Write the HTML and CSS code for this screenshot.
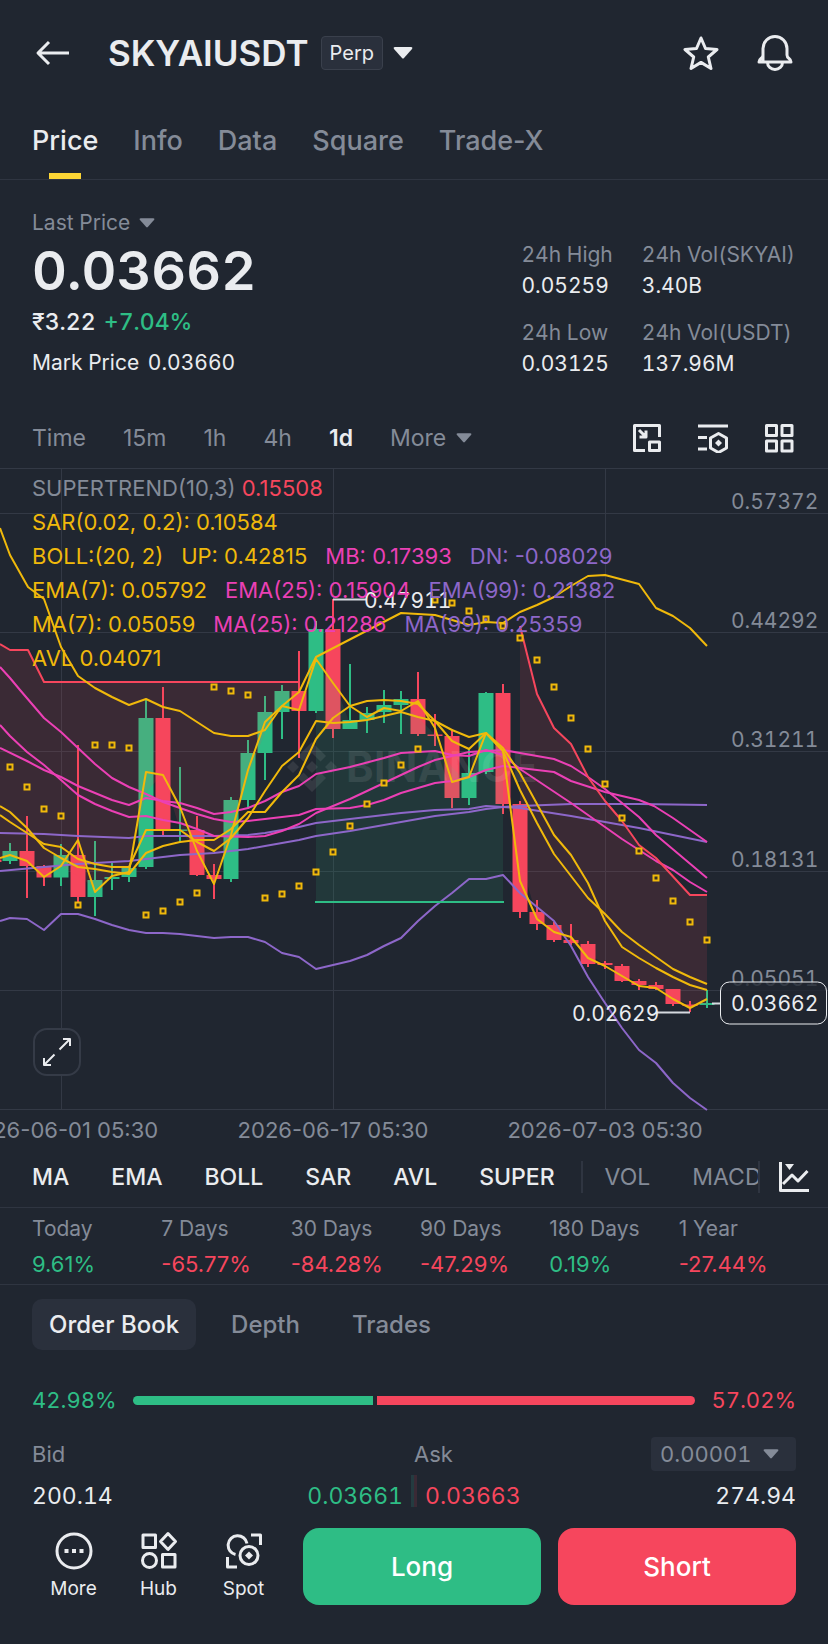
FILE: index.html
```html
<!DOCTYPE html>
<html lang="en">
<head>
<meta charset="utf-8">
<meta name="viewport" content="width=device-width, initial-scale=1">
<title>SKYAIUSDT Perp</title>
<link rel="stylesheet" href="styles.css">
</head>
<body>
<div class="app">
  <header class="topbar">
    <button class="icon-btn" type="button" aria-label="Back">
      <svg class="icon" width="36" height="30" viewBox="0 0 36 30"><path d="M35 15H4M15 4 4 15l11 11"/></svg>
    </button>
    <h1 class="pair">SKYAIUSDT</h1>
    <span class="badge">Perp</span>
    <button class="icon-btn" type="button" aria-label="Choose pair">
      <svg class="caret caret-lg" width="20" height="12" viewBox="0 0 20 12"><path d="M2 0h16q2 0 1 2l-8 9q-1 1-2 0L1 2Q0 0 2 0z"/></svg>
    </button>
    <div class="topbar-actions">
      <button class="icon-btn" type="button" aria-label="Favourite">
        <svg class="icon" width="36" height="36" viewBox="0 0 36 36"><path d="m18 3 4.500 10.500 11.500 1-8.700 7.500 2.700 11.500-10-6.100-10 6.100 2.700-11.500L2 14.500l11.500-1z"/></svg>
      </button>
      <button class="icon-btn" type="button" aria-label="Alerts">
        <svg class="icon" width="36" height="36" viewBox="0 0 36 36"><path d="M6 27V13.500a12 12 0 0 1 24 0V20q0 2 2 3.500 2 1.500 2 3.500H2q0-2 2-3.500 2-1.500 2-3.500M10.500 27.500a7.500 7 0 0 0 15 0"/></svg>
      </button>
    </div>
  </header>

  <nav class="tabs" aria-label="Sections">
    <a class="tab tab-active" href="#price">Price</a>
    <a class="tab" href="#info">Info</a>
    <a class="tab" href="#data">Data</a>
    <a class="tab" href="#square">Square</a>
    <a class="tab" href="#tradex">Trade-X</a>
  </nav>

  <section class="summary">
    <div class="quote">
      <button class="quote-type" type="button">Last Price
        <svg class="caret" width="16" height="10" viewBox="0 0 20 12"><path d="M2 0h16q2 0 1 2l-8 9q-1 1-2 0L1 2Q0 0 2 0z"/></svg>
      </button>
      <div class="quote-price">0.03662</div>
      <div class="quote-fiat">₹3.22 <span class="up">+7.04%</span></div>
      <div class="quote-mark">Mark Price <span>0.03660</span></div>
    </div>
    <dl class="stats">
      <div><dt>24h High</dt><dd>0.05259</dd></div>
      <div><dt>24h Vol(SKYAI)</dt><dd>3.40B</dd></div>
      <div><dt>24h Low</dt><dd>0.03125</dd></div>
      <div><dt>24h Vol(USDT)</dt><dd>137.96M</dd></div>
    </dl>
  </section>

  <div class="intervals">
    <button type="button">Time</button>
    <button type="button">15m</button>
    <button type="button">1h</button>
    <button type="button">4h</button>
    <button class="on" type="button">1d</button>
    <button class="with-caret" type="button">More
      <svg class="caret" width="16" height="10" viewBox="0 0 20 12"><path d="M2 0h16q2 0 1 2l-8 9q-1 1-2 0L1 2Q0 0 2 0z"/></svg>
    </button>
    <div class="chart-tools">
      <button class="icon-btn" type="button" aria-label="Floating window">
        <svg class="icon" width="30" height="30" viewBox="0 0 30 30"><path d="M13 27.500H2.500v-25h25V14M17.500 19h10v8.500h-10zM7 7l6.500 6.500M14 7.500V14H7.500"/></svg>
      </button>
      <button class="icon-btn" type="button" aria-label="Chart settings">
        <svg class="icon" width="30" height="30" viewBox="0 0 30 30"><path d="M0 3h30M0 14.500h9M0 26h9M20.500 10.500l8 4.500v10l-8 4.500-8-4.500V15z"/><path class="solid" d="m20.500 16.500 3.500 3.500-3.500 3.500L17 20z"/></svg>
      </button>
      <button class="icon-btn" type="button" aria-label="Layout">
        <svg class="icon" width="30" height="30" viewBox="0 0 30 30"><path d="M2.500 2.500h10v10h-10zM18 2.500h10v10H18zM2.500 18h10v10h-10zM18 18h10v10H18z"/></svg>
      </button>
    </div>
  </div>

  <section class="chart" id="price">
    <svg class="plot" viewBox="0 468 828 678" role="img" aria-label="Daily price chart">
      <defs>
        <marker id="sar" markerUnits="userSpaceOnUse" markerWidth="8" markerHeight="8" refX="4" refY="4"><rect class="sar-dot" x="1.500" y="1.500" width="5" height="5"/></marker>
      </defs>
      <path class="grid" d="M0 468.500H828M0 513.500H828M0 632.500H828M0 751.500H828M0 871.500H828M0 990.500H828M0 1109.500H828M61.500 468V1110M333.500 468V1110M605.500 468V1110"/>

      <path class="wick c-up" d="M10 843V864M61 844V886M95 841V916M112 863V890M129 867V882M146 700V869M180 767V842M231 797V882M248 740V809M265 696V780M282 685V739M316 621V713M350 664V729M367 707V733M384 690V723M401 691V734M469 749V805M486 692V774M707 990V1008"/>
      <path class="wick c-down" d="M27 816V898M44 865V886M78 745V903M163 687V835M197 816V876M214 864V899M299 651V758M333 599V738M418 672V736M435 714V746M452 729V808M503 684V814M520 801V918M537 900V930M554 922V942M571 924V945M588 941V967M605 961V969M622 964V982M639 979V990M656 982V990M673 989V1006M690 1001V1012"/>
      <path class="candle c-up" d="M10 851V861M61 855V877.500M95 880V897M112 877V879M129 868V877M146 718V867M180 829.500V831M231 800V879M248 753V800M265 712V753M282 691V712M316 629V711M350 720V729M367 713V720M384 705V712M401 699V705M469 773V798M486 693V772M707 1003V1005"/>
      <path class="candle c-down" d="M-6 859.500V862M27 851V866M44 866V877.500M78 855V897M163 718V830M197 830V875M214 875V879M299 691V711M333 629V729M418 699V734M435 734.500V736M452 736V798M503 693V804M520 804V912M537 912V924M554 925V940M571 940V943M588 944V964M605 963V965M622 966V981M639 981V985M656 985V989M673 989V1004M690 1004.500V1006"/>

      <path class="area-down" d="M0 644 10 650H28L44 682H299V701L282 701 265 732 248 777 231 840 214 877 197 852 180 830 163 774 146 792 129 872 112 878 95 888 78 876 61 866 44 872 27 858 10 856 0 859z"/>
      <path class="area-up" d="M316 902V670L333 679 350 724 367 716 384 708 401 702 418 717 435 735 452 767 469 785 486 733 503 748V902z"/>
      <path class="area-down" d="M520 626 537 694 554 728 571 744 588 777 605 801 622 821 639 845 656 858 690 895H707V1004L690 1005 673 997 656 987 639 983 622 973 605 964 588 954 571 942 554 932 537 918 520 858z"/>
      <g class="watermark">
        <path d="m312 742 14 14-5.500 5.500-8.500-8.500-8.500 8.500-5.500-5.500zM312 761l6 6-6 6-6-6zM293 761l6 6-6 6-6-6zM331 761l6 6-6 6-6-6zM312 792l14-14-5.500-5.500-8.500 8.500-8.500-8.500-5.500 5.500z"/>
        <text x="346" y="782">BINANCE</text>
      </g>

      <polyline class="line l-violet" points="0,833 44,834 78,836 129,838 146,836 180,836 214,836 248,835 265,833 299,827 316,823 350,819 401,813 435,810 469,809 486,806 503,807 520,808 571,816 639,828 707,842"/>
      <polyline class="line l-violet" points="0,871 44,867 78,864 129,861 180,855 214,853 248,849 265,846 299,840 316,836 350,831 401,822 435,816 469,812 486,809 503,807 520,806 571,804 639,804 707,805"/>
      <polyline class="line l-violet" points="0,921 10,918 27,919 44,930 61,914 78,914 95,919 112,925 129,930 146,933 163,933 180,934 214,938 231,937 248,937 265,942 282,953 299,957 316,969 350,961 367,955 384,946 401,938 418,921 435,906 452,893 469,879 486,879 503,875 520,893 537,907 554,921 571,946 588,977 605,1003 622,1028 639,1050 656,1063 673,1083 690,1098 707,1110"/>
      <polyline class="line l-pink" points="0,667 10,678 20,690 44,718 61,732 78,748 95,764 112,778 129,787 146,794 163,802 180,808 197,814 214,819 231,822 248,821 265,819 299,815 316,809 350,808 367,805 384,800 401,793 435,783 452,781 469,777 486,770 503,766 520,768 554,772 571,781 605,792 639,800 654,806 673,818 707,842"/>
      <polyline class="line l-pink" points="0,725 10,736 27,752 44,765 61,780 78,795 95,804 112,811 129,817 146,816 163,820 180,823 197,829 214,836 248,837 265,836 282,831 299,824 316,813 350,799 384,783 418,767 435,760 452,756 469,752 486,751 503,750 520,753 554,759 571,766 588,777 605,789 622,803 639,817 656,835 707,878"/>
      <polyline class="line l-pink" points="0,748 27,761 44,770 61,777 78,786 112,800 129,805 146,798 163,801 180,803 197,808 214,814 231,812 248,808 265,801 282,792 299,786 316,774 350,767 384,758 401,753 435,751 452,755 469,756 486,750 503,755 520,769 571,803 622,839 639,850 656,861 673,870 690,882 707,892"/>

      <polyline class="line l-red" points="0,644 10,650 28,650 44,682 299,682"/>
      <polyline class="line l-red" points="520,626 537,694 554,728 571,744 588,777 605,801 622,821 639,845 656,858 690,895 707,895"/>
      <path class="line l-green" d="M315 902H504"/>

      <polyline class="line l-gold" points="0,528 10,555 28,587 44,599 61,647 78,676 95,688 112,697 129,705 146,699 163,707 180,711 214,733 231,736 248,736 265,730 282,706 299,692 316,657 401,613 435,615 469,625 486,622 503,623 520,612 537,605 554,597 571,586 588,576 605,575 639,584 656,608 673,616 690,628 707,646"/>
      <polyline class="line l-gold" points="0,806 10,812 27,828 44,848 61,858 78,867 95,869 112,872 129,874 146,853 163,846 180,842 197,840 214,840 231,829 248,812 265,812 282,792 299,775 316,739 333,718 350,706 367,701 384,700 401,701 418,704 435,721 452,741 469,749 486,733 503,748 520,773 537,804 554,835 571,855 588,883 605,921 622,947 639,958 656,968 673,977 690,985 707,990"/>
      <polyline class="line l-gold" points="0,815 10,822 27,833 44,844 61,847 78,859 95,864 112,867 129,867 146,830 180,830 197,842 214,851 231,838 248,818 265,791 282,766 299,752 316,721 333,723 350,722 367,720 384,716 401,712 418,717 435,721 452,730 469,737 486,733 503,751 520,790 537,823 554,854 571,876 588,898 605,914 622,932 639,945 656,957 673,969 690,977 707,984"/>
      <polyline class="line l-gold" points="0,858 10,855 27,861 44,877 61,866 78,840 95,892 112,876 129,872 146,772 163,775 180,807 197,851 214,884 231,835 248,770 265,722 282,706 299,710 316,659 333,683 350,706 367,717 384,708 401,711 418,701 435,728 452,782 469,777 486,733 503,751 520,881 537,919 554,932 571,937 588,958 605,966 622,976 639,986 656,988 673,999 690,1008 707,999"/>
      <polyline class="sar" points="10,767 27,787 44,809 61,816 78,905 95,745 112,745 129,748 146,915 163,911 180,902 197,893 214,687 231,691 248,695 265,898 282,894 299,886 316,872 333,852 350,826 367,804 384,783 401,765 418,749 435,600 452,603 469,611 486,619 503,626 520,638 537,660 554,687 571,718 588,749 605,784 622,818 639,851 656,878 673,901 690,922 707,940"/>

      <path class="callout" d="M333 599.500H366M656 1012.500H690M712 1003.500H720"/>
      <text class="label" x="364" y="608">0.47911</text>
      <text class="label" x="572" y="1021">0.02629</text>

      <g class="axis">
        <text x="731" y="509">0.57372</text>
        <text x="731" y="628">0.44292</text>
        <text x="731" y="747">0.31211</text>
        <text x="731" y="867">0.18131</text>
        <text x="731" y="986">0.05051</text>
      </g>
      <g class="axis dates">
        <text x="62" y="1138" text-anchor="middle">2026-06-01 05:30</text>
        <text x="333" y="1138" text-anchor="middle">2026-06-17 05:30</text>
        <text x="605" y="1138" text-anchor="middle">2026-07-03 05:30</text>
      </g>
      <rect class="price-tag" x="720.500" y="982" width="106" height="42" rx="9"/>
      <text class="label" x="731" y="1011">0.03662</text>
    </svg>

    <div class="legend">
      <p><span class="muted">SUPERTREND(10,3)</span> <span class="red">0.15508</span></p>
      <p><span class="gold">SAR(0.02, 0.2): 0.10584</span></p>
      <p class="spaced"><span class="gold">BOLL:(20, 2)</span><span class="gold">UP: 0.42815</span><span class="pink">MB: 0.17393</span><span class="violet">DN: -0.08029</span></p>
      <p class="spaced"><span class="gold">EMA(7): 0.05792</span><span class="pink">EMA(25): 0.15904</span><span class="violet">EMA(99): 0.21382</span></p>
      <p class="spaced"><span class="gold">MA(7): 0.05059</span><span class="pink">MA(25): 0.21286</span><span class="violet">MA(99): 0.25359</span></p>
      <p><span class="gold">AVL 0.04071</span></p>
    </div>
    <button class="expand" type="button" aria-label="Full screen">
      <svg class="icon icon-thin" width="32" height="32" viewBox="0 0 32 32"><path d="M18.500 13.500 29 3M22 3h7v7M13.500 18.500 3 29M3 22v7h7"/></svg>
    </button>
  </section>

  <div class="indicators">
    <div class="indicator-list">
      <button class="on" type="button">MA</button>
      <button class="on" type="button">EMA</button>
      <button class="on" type="button">BOLL</button>
      <button class="on" type="button">SAR</button>
      <button class="on" type="button">AVL</button>
      <button class="on" type="button">SUPER</button>
      <span class="rule"></span>
      <button type="button">VOL</button>
      <button type="button">MACD</button>
    </div>
    <button class="icon-btn indicator-more" type="button" aria-label="Indicators">
      <svg class="icon" width="32" height="32" viewBox="0 0 32 32"><path d="M2.500 1v28.500H31M5 23l9-9 6 6 9.500-10"/><path class="solid" d="M7 3h9l-4.500 6z"/></svg>
    </button>
  </div>

  <dl class="performance">
    <div><dt>Today</dt><dd class="up">9.61%</dd></div>
    <div><dt>7 Days</dt><dd class="red">-65.77%</dd></div>
    <div><dt>30 Days</dt><dd class="red">-84.28%</dd></div>
    <div><dt>90 Days</dt><dd class="red">-47.29%</dd></div>
    <div><dt>180 Days</dt><dd class="up">0.19%</dd></div>
    <div><dt>1 Year</dt><dd class="red">-27.44%</dd></div>
  </dl>

  <section class="book">
    <div class="book-tabs">
      <button class="on" type="button">Order Book</button>
      <button type="button">Depth</button>
      <button type="button">Trades</button>
    </div>
    <div class="ratio">
      <span class="up">42.98%</span>
      <div class="ratio-bar"><i class="ratio-bid" style="flex-grow:42.98"></i><i class="ratio-ask" style="flex-grow:57.02"></i></div>
      <span class="red">57.02%</span>
    </div>
    <div class="book-head">
      <span>Bid</span>
      <span>Ask</span>
      <label class="precision">
        <select aria-label="Price precision"><option>0.00001</option><option>0.0001</option><option>0.001</option></select>
        <svg class="caret" width="16" height="10" viewBox="0 0 20 12"><path d="M2 0h16q2 0 1 2l-8 9q-1 1-2 0L1 2Q0 0 2 0z"/></svg>
      </label>
    </div>
    <div class="book-row">
      <div class="side"><span>200.14</span><span class="up">0.03661</span></div>
      <div class="depth-bars"><i class="depth-bid"></i><i class="depth-ask"></i></div>
      <div class="side"><span class="red">0.03663</span><span>274.94</span></div>
    </div>
  </section>

  <footer class="actions">
    <nav class="shortcuts" aria-label="Shortcuts">
      <a href="#more"><svg class="icon" width="40" height="40" viewBox="0 0 40 40"><circle cx="20" cy="20" r="17"/><path class="solid" d="M10.500 18h4v4h-4zM18 18h4v4h-4zM25.500 18h4v4h-4z"/></svg>More</a>
      <a href="#hub"><svg class="icon" width="40" height="40" viewBox="0 0 40 40"><path d="M4 4h12.500v12.500H4zM23.500 23.500H36V36H23.500zM29 2.500l7.500 8-7.500 8-7.500-8z"/><circle cx="10.500" cy="29.500" r="7"/></svg>Hub</a>
      <a href="#spot"><svg class="icon" width="40" height="40" viewBox="0 0 40 40"><path d="M27 4h9.500v10M3.500 26v10H13M11.500 23.500A9.500 9.500 0 1 1 23 12.500"/><circle cx="25" cy="24.500" r="9"/><path class="solid" d="m25 20.500 4 4-4 4-4-4z"/></svg>Spot</a>
    </nav>
    <button class="trade trade-long" type="button">Long</button>
    <button class="trade trade-short" type="button">Short</button>
  </footer>
</div>
</body>
</html>
```
FILE: styles.css
```css
:root {
  --bg: #202630;
  --panel: #2a303c;
  --line: #2f3541;
  --text: #eaecef;
  --muted: #848b98;
  --up: #2ebd85;
  --down: #f6465d;
  --gold: #f0b90b;
  --pink: #eb40b5;
  --violet: #8d67c9;
}

* { box-sizing: border-box; }

body {
  margin: 0;
  background: var(--bg);
  color: var(--text);
  font-family: Inter, "Liberation Sans", sans-serif;
  font-size: 22px;
}

h1, p, dl, dd { margin: 0; }

button, select {
  margin: 0;
  padding: 0;
  border: 0;
  background: none;
  color: inherit;
  font: inherit;
  font-variant-numeric: inherit;
  cursor: pointer;
}

a { color: inherit; text-decoration: none; }

.app { display: flex; flex-direction: column; overflow: hidden; }

.icon { display: block; fill: none; stroke: currentColor; stroke-width: 3; stroke-linejoin: round; }
.icon-thin { stroke-width: 2; }
.icon .solid { fill: currentColor; stroke: none; }
.icon-btn { display: block; color: var(--text); }
.caret { fill: var(--muted); flex: none; }
.caret-lg { display: block; fill: var(--text); }

.up { color: var(--up); }
.red { color: var(--down); }
.gold { color: var(--gold); }
.pink { color: var(--pink); }
.violet { color: var(--violet); }
.muted { color: var(--muted); }

.topbar { display: flex; align-items: center; height: 106px; padding: 0 35px 0 34px; }
.pair { margin-left: 38px; font-size: 35px; font-weight: 600; line-height: 44px; }
.badge {
  margin: 0 10px 0 12px;
  padding: 0 8px;
  border: 1px solid #3a404c;
  border-radius: 4px;
  background: var(--panel);
  font-size: 20px;
  line-height: 32px;
}
.topbar-actions { display: flex; gap: 38px; margin-left: auto; }

.tabs {
  display: flex;
  gap: 35px;
  padding: 0 32px;
  border-bottom: 1px solid var(--line);
  color: var(--muted);
  font-size: 27px;
  font-weight: 500;
  line-height: 34px;
}
.tab { display: flex; flex-direction: column; align-items: center; padding-top: 18px; }
.tab::after { content: ""; width: 32px; height: 6px; margin-top: 15px; }
.tab-active { color: var(--text); }
.tab-active::after { background: #fcd535; }

.summary { display: flex; justify-content: space-between; padding: 29px 33px 28px 32px; font-variant-numeric: tabular-nums; }
.quote-type { display: flex; align-items: center; gap: 9px; color: var(--muted); font-size: 21px; line-height: 28px; }
.quote-price { font-size: 54px; font-weight: 600; line-height: 68px; }
.quote-fiat { font-size: 23px; font-weight: 500; line-height: 34px; }
.quote-fiat span { margin-left: 2px; }
.quote-mark { margin-top: 10px; font-size: 21px; line-height: 28px; }
.quote-mark span { margin-left: 3px; }
.stats { display: grid; grid-template-columns: auto auto; gap: 16px 29px; padding-top: 30px; font-size: 21px; }
.stats dt { color: var(--muted); line-height: 31px; }
.stats dd { line-height: 31px; }

.intervals { display: flex; align-items: center; gap: 37px; height: 61px; padding: 0 34px 0 32px; color: var(--muted); font-size: 23px; }
.intervals .on { color: var(--text); font-weight: 600; }
.with-caret { display: flex; align-items: center; gap: 10px; }
.chart-tools { display: flex; gap: 36px; margin-left: auto; }

.chart { position: relative; }
.plot { display: block; width: 100%; height: auto; font-size: 21px; font-variant-numeric: tabular-nums; }
.grid { fill: none; stroke: #333945; stroke-width: 1; }
.watermark { fill: #fff; fill-opacity: 0.09; font-size: 42px; font-weight: 700; }
.wick { fill: none; stroke-width: 2; }
.candle { fill: none; stroke-width: 15; }
.c-up { stroke: var(--up); }
.c-down { stroke: var(--down); }
.area-down { fill: var(--down); fill-opacity: 0.12; }
.area-up { fill: var(--up); fill-opacity: 0.12; }
.line { fill: none; stroke-width: 2; stroke-linejoin: round; }
.l-violet { stroke: var(--violet); }
.l-pink { stroke: var(--pink); }
.l-gold { stroke: var(--gold); }
.l-red { stroke: var(--down); }
.l-green { stroke: var(--up); }
.sar { fill: none; stroke: none; marker: url(#sar); }
.sar-dot { fill: #3a3020; stroke: var(--gold); stroke-width: 2; }
.callout { fill: none; stroke: #d5d9df; stroke-width: 2; }
.label { fill: var(--text); }
.axis { fill: var(--muted); }
.dates { font-size: 22px; font-variant-numeric: normal; }
.price-tag { fill: var(--bg); fill-opacity: 0.8; stroke: var(--text); stroke-width: 1; }

.legend { position: absolute; top: 3px; left: 32px; line-height: 34px; white-space: nowrap; }
.spaced { display: flex; gap: 18px; }

.expand {
  position: absolute;
  bottom: 70px;
  left: 33px;
  display: grid;
  place-items: center;
  width: 48px;
  height: 48px;
  border: 2px solid #353b47;
  border-radius: 14px;
  background: var(--bg);
}

.indicators { display: flex; align-items: center; height: 62px; padding: 0 18px 0 32px; border-bottom: 1px solid var(--line); }
.indicator-list {
  display: flex;
  flex: 1;
  align-items: center;
  gap: 42px;
  min-width: 0;
  height: 32px;
  overflow: hidden;
  border-right: 2px solid var(--line);
  color: var(--muted);
  font-size: 23px;
}
.indicator-list .on { color: var(--text); font-weight: 500; }
.rule { flex: none; width: 2px; height: 32px; margin: 0 -20px 0 -16px; background: var(--line); }
.indicator-more { margin-left: 18px; }

.performance {
  display: grid;
  grid-template-columns: repeat(6, 1fr);
  padding: 6px 20px 5px 32px;
  border-bottom: 1px solid var(--line);
  line-height: 30px;
}
.performance dt { color: var(--muted); font-size: 21px; }
.performance dd { margin-top: 5px; }

.book { padding: 14px 32px 0; font-variant-numeric: tabular-nums; }
.book-tabs { display: flex; color: var(--muted); font-size: 24px; font-weight: 500; }
.book-tabs button { padding: 0 17px; border-radius: 10px; line-height: 51px; }
.book-tabs button + button { margin-left: 18px; }
.book-tabs .on { background: var(--panel); color: var(--text); }

.ratio { display: flex; align-items: center; gap: 16px; margin-top: 35px; line-height: 30px; }
.ratio-bar { display: flex; flex: 1; gap: 4px; }
.ratio-bid, .ratio-ask { flex: 1 1 0; height: 9px; }
.ratio-bid { border-radius: 5px 0 0 5px; background: var(--up); }
.ratio-ask { border-radius: 0 5px 5px 0; background: var(--down); }

.book-head { display: grid; grid-template-columns: 1fr auto 1fr; align-items: center; margin-top: 22px; color: var(--muted); }
.book-head > :nth-child(2) { width: 0; }
.precision {
  display: flex;
  align-items: center;
  justify-self: end;
  gap: 11px;
  height: 34px;
  padding: 0 17px 0 9px;
  border-radius: 4px;
  background: var(--panel);
}
.precision select { appearance: none; }

.book-row { display: flex; gap: 8px; height: 42px; margin-top: 4px; font-size: 23px; line-height: 42px; }
.side { display: flex; flex: 1; justify-content: space-between; }
.depth-bars { display: flex; }
.depth-bars i { width: 3px; height: 32px; }
.depth-bid { background: #243b40; }
.depth-ask { background: #3a2a35; }

.actions { display: flex; gap: 17px; padding: 11px 32px 39px 31px; }
.shortcuts { display: grid; grid-template-columns: repeat(3, 1fr); flex: none; width: 255px; font-size: 19px; line-height: 24px; }
.shortcuts a { display: flex; flex-direction: column; align-items: center; gap: 6px; padding-top: 3px; }
.trade { flex: 1; border-radius: 16px; color: #fff; font-size: 26px; font-weight: 500; line-height: 77px; }
.trade-long { background: var(--up); }
.trade-short { background: var(--down); }
```
